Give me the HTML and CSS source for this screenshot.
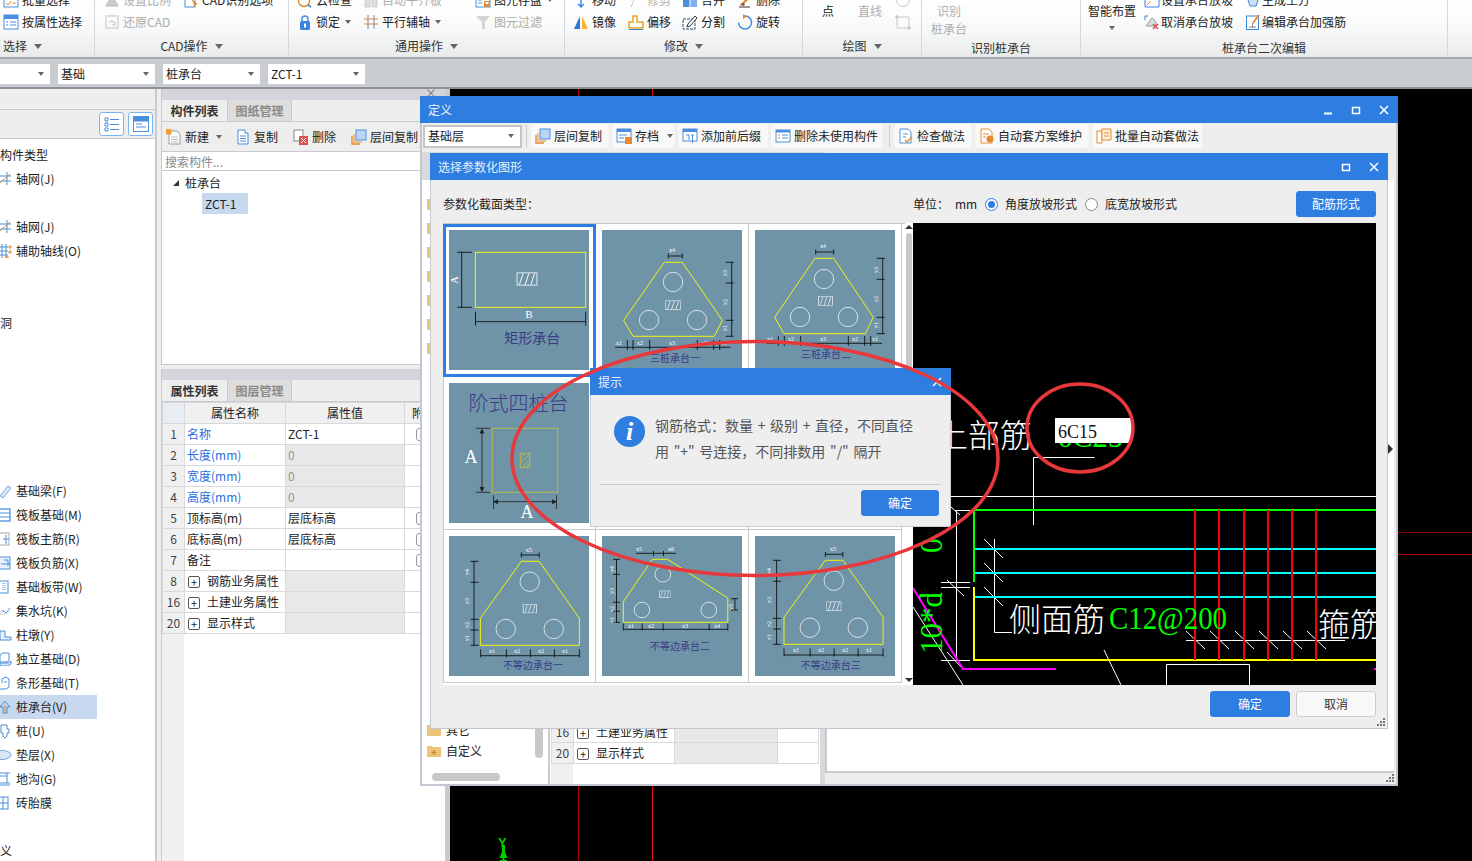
FILE: index.html
```html
<!DOCTYPE html>
<html lang="zh-CN">
<head>
<meta charset="utf-8">
<title>定义 - 桩承台</title>
<link rel="stylesheet" href="styles.css">
</head>
<body>
<svg class="sprite" xmlns="http://www.w3.org/2000/svg">
  <symbol id="i-batch" viewBox="0 0 16 16"><rect x="1" y="3" width="14" height="12" fill="#fff" stroke="#4a8fdc"/><path d="M3 11l2 2 3-4M9 11h4" stroke="#e58a2e" fill="none"/></symbol>
  <symbol id="i-attr" viewBox="0 0 16 16"><rect x="1" y="1" width="14" height="14" fill="#fff" stroke="#4a8fdc"/><rect x="1" y="1" width="14" height="4" fill="#4a8fdc"/><path d="M3 8h2M7 8h6M3 11h2M7 11h6" stroke="#4a8fdc"/></symbol>
  <symbol id="i-scale" viewBox="0 0 16 16"><path d="M2 14L8 3l6 11z" fill="#ccc" stroke="#bbb"/></symbol>
  <symbol id="i-cadopt" viewBox="0 0 16 16"><rect x="2" y="3" width="10" height="12" fill="#fff" stroke="#4a8fdc"/><path d="M9 8l5 4-3 .5 1 2.5" fill="#e58a2e" stroke="#e58a2e"/></symbol>
  <symbol id="i-restore" viewBox="0 0 16 16"><rect x="2" y="2" width="12" height="12" fill="none" stroke="#c4c4c4"/><path d="M5 9l3-3v2h3v3H8" fill="none" stroke="#c4c4c4"/></symbol>
  <symbol id="i-cloud" viewBox="0 0 16 16"><circle cx="7" cy="9" r="5.5" fill="#fff" stroke="#e58a2e" stroke-width="1.5"/><path d="M11 13l3 2" stroke="#4a8fdc" stroke-width="2"/></symbol>
  <symbol id="i-level" viewBox="0 0 16 16"><path d="M2 6h5v9H2zM9 6h5v9H9z" fill="#ddd" stroke="#ccc"/></symbol>
  <symbol id="i-save" viewBox="0 0 16 16"><rect x="1" y="2" width="14" height="13" fill="#fff" stroke="#4a8fdc"/><rect x="1" y="2" width="14" height="4" fill="#4a8fdc"/><path d="M3 8h4M3 11h4" stroke="#4a8fdc"/><rect x="9" y="9" width="6" height="6" fill="#e58a2e"/><rect x="10.5" y="10" width="3" height="2" fill="#fff"/></symbol>
  <symbol id="i-lock" viewBox="0 0 16 16"><path d="M5 8V5a3 3 0 016 0v3" fill="none" stroke="#4a8fdc" stroke-width="1.5"/><rect x="3" y="7" width="10" height="9" rx="1.5" fill="#3c84e0"/><rect x="7" y="9.5" width="2" height="4" fill="#fff"/></symbol>
  <symbol id="i-axis" viewBox="0 0 16 16"><path d="M1 5h14M1 10h14" stroke="#e58a2e"/><path d="M5 1v14M11 1v14" stroke="#7a8a9c"/></symbol>
  <symbol id="i-filter" viewBox="0 0 16 16"><path d="M1 2h14L10 8v7H7V8z" fill="#d4d4d4"/></symbol>
  <symbol id="i-move" viewBox="0 0 16 16"><path d="M8 5v10M5 12l3 3 3-3M3 7L1 5l2-2M13 3l2 2-2 2M1 5h14" fill="none" stroke="#3c84e0" stroke-width="1.4"/></symbol>
  <symbol id="i-trim" viewBox="0 0 16 16"><path d="M3 15L9 1" stroke="#c8c8c8"/></symbol>
  <symbol id="i-merge" viewBox="0 0 16 16"><rect x="1" y="2" width="6.5" height="13" fill="#4a8fdc"/><rect x="8.5" y="2" width="6.5" height="13" fill="#7db0ea"/></symbol>
  <symbol id="i-del" viewBox="0 0 16 16"><path d="M6 10l6-7 2 2-6 6z" fill="#e58a2e"/><path d="M2 15h11" stroke="#333"/><path d="M3 13l3-3 2 2-1 2z" fill="#a0522d"/></symbol>
  <symbol id="i-mirror" viewBox="0 0 16 16"><path d="M1 15L7 2v13z" fill="#2f77d6"/><path d="M9 2l6 13H9z" fill="#f4b632"/></symbol>
  <symbol id="i-offset" viewBox="0 0 16 16"><path d="M5 2h4v6h6v6H1V8h4z" fill="none" stroke="#e8a92b" stroke-width="1.6"/><path d="M1 15.500h14" stroke="#3c84e0"/></symbol>
  <symbol id="i-split" viewBox="0 0 16 16"><rect x="1" y="5" width="12" height="10" fill="none" stroke="#33506f" stroke-dasharray="3 1"/><path d="M6 10l7-8 2 2-7 8-3 1z" fill="#fff" stroke="#333"/></symbol>
  <symbol id="i-rotate" viewBox="0 0 16 16"><path d="M8 2a6.500 6.500 0 11-6.500 6.500" fill="none" stroke="#4a8fdc" stroke-width="1.5"/><path d="M6 0l4 2.500L6 5z" fill="#e58a2e"/></symbol>
  <symbol id="i-circle" viewBox="0 0 16 16"><circle cx="8" cy="8" r="6.500" fill="none" stroke="#c8c8c8"/></symbol>
  <symbol id="i-rect" viewBox="0 0 16 16"><path d="M2 3h12v11H2z" fill="none" stroke="#c8c8c8"/><path d="M1 2h2v2H1zM13 13h2v2h-2z" fill="#fff" stroke="#bbb"/></symbol>
  <symbol id="i-slope" viewBox="0 0 16 16"><path d="M1 1h8v6h6v8H1z" fill="#fff" stroke="#3c84e0"/><path d="M3 13l4-4" stroke="#e58a2e"/></symbol>
  <symbol id="i-earth" viewBox="0 0 16 16"><ellipse cx="8" cy="4" rx="6" ry="3" fill="#e9e3d0" stroke="#b79b56"/><path d="M2 5l3 9h6l3-9" fill="#cfe0f4" stroke="#3c84e0"/></symbol>
  <symbol id="i-unslope" viewBox="0 0 16 16"><path d="M1 2h3M1 2v4" stroke="#3c84e0"/><path d="M2 12L8 4l4 4v4z" fill="#ddd" stroke="#999"/><path d="M9 10l5 5M14 10l-5 5" stroke="#d9534f" stroke-width="1.600"/></symbol>
  <symbol id="i-strong" viewBox="0 0 16 16"><rect x="1.500" y="2" width="12" height="13.500" fill="#fff" stroke="#3c84e0"/><path d="M8 9L14 1" stroke="#e58a2e" stroke-width="2"/><path d="M4 13h7M7.500 9v5" stroke="#888"/></symbol>
  <symbol id="i-new" viewBox="0 0 16 16"><path d="M3 2h8l3 3v10H3z" fill="#fff" stroke="#999"/><path d="M5 8h7M5 10.500h7M5 13h7" stroke="#bbb"/><rect x="0" y="0" width="5.500" height="5.500" fill="#f0a030"/></symbol>
  <symbol id="i-copy" viewBox="0 0 16 16"><path d="M3 1h7v3h3v11H3z" fill="#fff" stroke="#4a8fdc"/><path d="M5 7h6M5 9.500h6M5 12h6" stroke="#4a8fdc"/></symbol>
  <symbol id="i-rm" viewBox="0 0 16 16"><rect x="1" y="1" width="9" height="11" fill="#fff" stroke="#888"/><rect x="6" y="7" width="9" height="9" fill="#d9534f"/><path d="M8 9l5 5M13 9l-5 5" stroke="#fff"/></symbol>
  <symbol id="i-floor" viewBox="0 0 16 16"><path d="M1 7v8h8" fill="none" stroke="#e58a2e" stroke-width="1.400"/><path d="M3 5v8h8" fill="none" stroke="#e58a2e"/><rect x="5" y="1" width="10" height="10" fill="#b8d6f7" stroke="#4a8fdc"/></symbol>
  <symbol id="i-archive" viewBox="0 0 16 16"><rect x="1" y="1" width="14" height="13" fill="#fff" stroke="#4a8fdc"/><rect x="1" y="1" width="14" height="3" fill="#4a8fdc"/><path d="M3 7h8M3 10h5" stroke="#4a8fdc"/><rect x="9" y="9" width="7" height="7" fill="#e58a2e"/></symbol>
  <symbol id="i-prefix" viewBox="0 0 16 16"><rect x="1" y="1" width="14" height="12" fill="#fff" stroke="#4a8fdc"/><rect x="1" y="1" width="14" height="3" fill="#4a8fdc"/><path d="M4 7h3v5M9 7h3M10.500 7v8" stroke="#4a8fdc" fill="none"/></symbol>
  <symbol id="i-unused" viewBox="0 0 16 16"><rect x="1" y="2" width="14" height="12" fill="#fff" stroke="#4a8fdc"/><rect x="1" y="2" width="14" height="2.500" fill="#4a8fdc"/><path d="M3 7h2M3 10h2" stroke="#e58a2e"/><path d="M7 7h6M7 10h6" stroke="#4a8fdc"/></symbol>
  <symbol id="i-check" viewBox="0 0 16 16"><path d="M2 1h8l3 3v11H2z" fill="#fff" stroke="#4a8fdc"/><path d="M5 6h5M5 9h3" stroke="#4a8fdc"/><path d="M7 12l2 2 5-5" fill="none" stroke="#e58a2e" stroke-width="1.500"/></symbol>
  <symbol id="i-auto" viewBox="0 0 16 16"><path d="M2 1h8l3 3v11H2z" fill="#fff" stroke="#e58a2e"/><path d="M4 6h6M4 9h3" stroke="#e58a2e"/><circle cx="11" cy="11" r="3.500" fill="#e58a2e"/></symbol>
  <symbol id="i-bulk" viewBox="0 0 16 16"><path d="M1 3h5v12H1z" fill="#fff" stroke="#e58a2e"/><path d="M6 1h9v11H6z" fill="#fdf0dc" stroke="#e58a2e"/><path d="M8 5h5M8 8h5" stroke="#e58a2e"/></symbol>
  <symbol id="i-grid" viewBox="0 0 12 14"><path d="M0 4h11M0 9h11M7 0v13" stroke="#4a8fdc" fill="none"/><path d="M0 11L10 2" stroke="#e58a2e"/></symbol>
  <symbol id="i-aux" viewBox="0 0 12 14"><path d="M0 3h8M0 7h8M0 11h8M2 0v14M6 0v14" stroke="#4a8fdc"/><path d="M9 2h2v2H9zM9 7h2v2H9zM6 12h2v2H6z" fill="none" stroke="#e58a2e"/></symbol>
  <symbol id="i-beam" viewBox="0 0 12 14"><path d="M0 12L8 2l3 2-8 10z" fill="#dbe7f5" stroke="#7aa7da"/></symbol>
  <symbol id="i-raft" viewBox="0 0 12 14"><rect x="-2" y="1" width="12" height="12" fill="none" stroke="#4a8fdc" stroke-width="1.300"/><path d="M0 5h10M0 9h10" stroke="#4a8fdc"/></symbol>
  <symbol id="i-main" viewBox="0 0 12 14"><rect x="-3" y="1" width="12" height="12" fill="none" stroke="#aaa"/><path d="M6 3v9M3 7h6" stroke="#4a8fdc"/></symbol>
  <symbol id="i-neg" viewBox="0 0 12 14"><rect x="-3" y="1" width="13" height="12" fill="#e8f1fb" stroke="#4a8fdc"/><path d="M4 4h4v6M1 8h9" fill="none" stroke="#4a8fdc"/></symbol>
  <symbol id="i-band" viewBox="0 0 12 14"><rect x="-3" y="1" width="11" height="12" fill="none" stroke="#4a8fdc"/><path d="M3 3v8M5 3v8" stroke="#4a8fdc" stroke-dasharray="1 1"/></symbol>
  <symbol id="i-pit" viewBox="0 0 12 14"><path d="M1 7h3l2 2 4-5" fill="none" stroke="#4a8fdc"/><path d="M0 10h7l3-3" fill="none" stroke="#aaa" stroke-dasharray="1 1"/></symbol>
  <symbol id="i-pier" viewBox="0 0 12 14"><path d="M0 3h5v6h6v3H0z" fill="#e8f1fb" stroke="#4a8fdc"/></symbol>
  <symbol id="i-iso" viewBox="0 0 12 14"><path d="M0 3l3-2h6v7l-2 2H0z" fill="#fff" stroke="#4a8fdc"/><path d="M0 11h8l3-2v3l-3 2H0z" fill="#dbe7f5" stroke="#4a8fdc"/></symbol>
  <symbol id="i-strip" viewBox="0 0 12 14"><path d="M2 7V3l4-2 3 2v8l-3 2H0" fill="#fff" stroke="#4a8fdc"/><path d="M4 6h3" stroke="#4a8fdc"/></symbol>
  <symbol id="i-cap" viewBox="0 0 12 14"><path d="M0 7l5-6 5 6-3 0v6H3V7z" fill="none" stroke="#4a8fdc"/><path d="M5 5v8" stroke="#e58a2e"/></symbol>
  <symbol id="i-pile" viewBox="0 0 12 14"><path d="M1 1h6v4h2v4H7v3l-2 2-2-2V9H1z" fill="none" stroke="#4a8fdc"/></symbol>
  <symbol id="i-pad" viewBox="0 0 12 14"><ellipse cx="2" cy="7" rx="9" ry="4.500" fill="#dbe7f5" stroke="#7aa7da"/></symbol>
  <symbol id="i-trench" viewBox="0 0 12 14"><path d="M0 1h10M7 1v10M0 4h7M0 11h10M0 13h10" fill="none" stroke="#4a8fdc"/></symbol>
  <symbol id="i-brick" viewBox="0 0 12 14"><rect x="-3" y="1" width="11" height="12" fill="none" stroke="#4a8fdc"/><path d="M-3 7h11M3 1v12" stroke="#4a8fdc"/></symbol>
  <symbol id="i-folder" viewBox="0 0 14 14"><path d="M0 2h5l1 1h8v10H0z" fill="#eec47c"/></symbol>
  <symbol id="i-folderadd" viewBox="0 0 14 14"><path d="M0 2h5l1 1h8v10H0z" fill="#eec47c"/><path d="M7 6v5M4.500 8.500h5" stroke="#c98f2e" stroke-width="1.400"/></symbol>
  <symbol id="i-hatch" viewBox="0 0 22 14"><rect x=".5" y=".5" width="21" height="13" fill="none" stroke="#fff"/><path d="M3 13l4-12M9 13l4-12M15 13l4-12" stroke="#fff"/></symbol>
</svg>

<div class="app">
  <header class="ribbon">
    <section class="group">
      <div class="tools tools-select">
        <div class="tool"><svg class="ic"><use href="#i-batch"/></svg>批量选择</div>
        <div class="tool"><svg class="ic"><use href="#i-attr"/></svg>按属性选择</div>
      </div>
      <div class="group-label left">选择<i class="tri"></i></div>
    </section>
    <section class="group">
      <div class="tools tools-cad">
        <div class="tool off"><svg class="ic"><use href="#i-scale"/></svg>设置比例</div>
        <div class="tool"><svg class="ic"><use href="#i-cadopt"/></svg>CAD识别选项</div>
        <div class="tool off"><svg class="ic"><use href="#i-restore"/></svg>还原CAD</div>
      </div>
      <div class="group-label">CAD操作<i class="tri"></i></div>
    </section>
    <section class="group">
      <div class="tools tools-common">
        <div class="tool"><svg class="ic"><use href="#i-cloud"/></svg>云检查</div>
        <div class="tool off"><svg class="ic"><use href="#i-level"/></svg>自动平齐板</div>
        <div class="tool"><svg class="ic"><use href="#i-save"/></svg>图元存盘<i class="tri small"></i></div>
        <div class="tool"><svg class="ic"><use href="#i-lock"/></svg>锁定<i class="tri small"></i></div>
        <div class="tool"><svg class="ic"><use href="#i-axis"/></svg>平行辅轴<i class="tri small"></i></div>
        <div class="tool off"><svg class="ic"><use href="#i-filter"/></svg>图元过滤</div>
      </div>
      <div class="group-label">通用操作<i class="tri"></i></div>
    </section>
    <section class="group">
      <div class="tools tools-modify">
        <div class="tool"><svg class="ic"><use href="#i-move"/></svg>移动</div>
        <div class="tool off"><svg class="ic"><use href="#i-trim"/></svg>修剪</div>
        <div class="tool"><svg class="ic"><use href="#i-merge"/></svg>合并</div>
        <div class="tool"><svg class="ic"><use href="#i-del"/></svg>删除</div>
        <div class="tool"><svg class="ic"><use href="#i-mirror"/></svg>镜像</div>
        <div class="tool"><svg class="ic"><use href="#i-offset"/></svg>偏移</div>
        <div class="tool"><svg class="ic"><use href="#i-split"/></svg>分割</div>
        <div class="tool"><svg class="ic"><use href="#i-rotate"/></svg>旋转</div>
      </div>
      <div class="group-label">修改<i class="tri"></i></div>
    </section>
    <section class="group">
      <div class="tools tools-draw">
        <div class="tall">点</div>
        <div class="tall off">直线</div>
        <div class="tool"><svg class="ic"><use href="#i-circle"/></svg></div>
        <div class="tool"><svg class="ic"><use href="#i-rect"/></svg></div>
      </div>
      <div class="group-label">绘图<i class="tri"></i></div>
    </section>
    <section class="group">
      <div class="tools tools-rec">
        <div class="stack off">识别<br>桩承台</div>
      </div>
      <div class="group-label low">识别桩承台</div>
    </section>
    <section class="group">
      <div class="tools tools-pile">
        <div class="smart">智能布置<i class="tri small"></i></div>
        <div class="tool"><svg class="ic"><use href="#i-slope"/></svg>设置承台放坡</div>
        <div class="tool"><svg class="ic"><use href="#i-earth"/></svg>生成土方</div>
        <div class="tool"><svg class="ic"><use href="#i-unslope"/></svg>取消承台放坡</div>
        <div class="tool"><svg class="ic"><use href="#i-strong"/></svg>编辑承台加强筋</div>
      </div>
      <div class="group-label low">桩承台二次编辑</div>
    </section>
  </header>

  <nav class="selbar">
    <div class="select first"><i class="tri small"></i></div>
    <div class="select">基础<i class="tri small"></i></div>
    <div class="select">桩承台<i class="tri small"></i></div>
    <div class="select">ZCT-1<i class="tri small"></i></div>
  </nav>

  <main class="workspace">
    <aside class="nav-panel">
      <div class="nav-top"></div>
      <div class="nav-tools">
        <span class="view-btn"><svg width="16" height="16" viewBox="0 0 16 16"><path d="M1 2h3v3H1zM1 7h3v3H1zM1 12h3v3H1zM6 3.500h9M6 8.500h9M6 13.500h9" fill="none" stroke="#4a8fdc"/></svg></span>
        <span class="view-btn"><svg width="16" height="16" viewBox="0 0 16 16"><rect x=".5" y=".5" width="15" height="15" fill="#fff" stroke="#4a8fdc"/><rect x=".5" y=".5" width="15" height="5" fill="#4a8fdc"/><path d="M3 8h6M3 11h10" stroke="#4a8fdc"/></svg></span>
      </div>
      <ul class="nav-list">
        <li>构件类型</li>
        <li class="item"><svg class="ni"><use href="#i-grid"/></svg>轴网(J)</li>
        <li></li>
        <li class="item"><svg class="ni"><use href="#i-grid"/></svg>轴网(J)</li>
        <li class="item"><svg class="ni"><use href="#i-aux"/></svg>辅助轴线(O)</li>
        <li></li>
        <li></li>
        <li>洞</li>
        <li></li><li></li><li></li><li></li><li></li><li></li>
        <li class="item"><svg class="ni"><use href="#i-beam"/></svg>基础梁(F)</li>
        <li class="item"><svg class="ni"><use href="#i-raft"/></svg>筏板基础(M)</li>
        <li class="item"><svg class="ni"><use href="#i-main"/></svg>筏板主筋(R)</li>
        <li class="item"><svg class="ni"><use href="#i-neg"/></svg>筏板负筋(X)</li>
        <li class="item"><svg class="ni"><use href="#i-band"/></svg>基础板带(W)</li>
        <li class="item"><svg class="ni"><use href="#i-pit"/></svg>集水坑(K)</li>
        <li class="item"><svg class="ni"><use href="#i-pier"/></svg>柱墩(Y)</li>
        <li class="item"><svg class="ni"><use href="#i-iso"/></svg>独立基础(D)</li>
        <li class="item"><svg class="ni"><use href="#i-strip"/></svg>条形基础(T)</li>
        <li class="item current"><svg class="ni"><use href="#i-cap"/></svg>桩承台(V)</li>
        <li class="item"><svg class="ni"><use href="#i-pile"/></svg>桩(U)</li>
        <li class="item"><svg class="ni"><use href="#i-pad"/></svg>垫层(X)</li>
        <li class="item"><svg class="ni"><use href="#i-trench"/></svg>地沟(G)</li>
        <li class="item"><svg class="ni"><use href="#i-brick"/></svg>砖胎膜</li>
        <li></li>
        <li>义</li>
      </ul>
    </aside>

    <div class="mid-panel">
      <section class="pane upper">
        <div class="band"><span class="band-x">×</span></div>
        <div class="tabs"><span class="tab active">构件列表</span><span class="tab">图纸管理</span></div>
        <div class="pane-tools">
          <span class="ptool"><svg class="ic"><use href="#i-new"/></svg>新建<i class="tri small"></i></span>
          <span class="ptool"><svg class="ic"><use href="#i-copy"/></svg>复制</span>
          <span class="ptool"><svg class="ic"><use href="#i-rm"/></svg>删除</span>
          <span class="ptool"><svg class="ic"><use href="#i-floor"/></svg>层间复制</span>
        </div>
        <div class="search">搜索构件...</div>
        <div class="tree">
          <div class="tree-root"><i class="corner"></i>桩承台</div>
          <div class="tree-leaf">ZCT-1</div>
        </div>
      </section>
      <section class="pane lower">
        <div class="band"></div>
        <div class="tabs"><span class="tab active">属性列表</span><span class="tab">图层管理</span></div>
        <table class="props">
          <colgroup><col class="c-n"><col class="c-name"><col class="c-val"><col class="c-x"></colgroup>
          <tr class="head"><th class="corner-cell"></th><th>属性名称</th><th>属性值</th><th class="clip">附加</th></tr>
          <tr><td class="num">1</td><td class="link">名称</td><td>ZCT-1</td><td><i class="cb"></i></td></tr>
          <tr><td class="num">2</td><td class="link">长度(mm)</td><td class="dis">0</td><td></td></tr>
          <tr><td class="num">3</td><td class="link">宽度(mm)</td><td class="dis">0</td><td></td></tr>
          <tr><td class="num">4</td><td class="link">高度(mm)</td><td class="dis">0</td><td></td></tr>
          <tr><td class="num">5</td><td>顶标高(m)</td><td>层底标高</td><td><i class="cb"></i></td></tr>
          <tr><td class="num">6</td><td>底标高(m)</td><td>层底标高</td><td><i class="cb"></i></td></tr>
          <tr><td class="num">7</td><td>备注</td><td></td><td><i class="cb"></i></td></tr>
          <tr><td class="num">8</td><td><i class="plus">+</i>钢筋业务属性</td><td class="dis"></td><td></td></tr>
          <tr><td class="num">16</td><td><i class="plus">+</i>土建业务属性</td><td class="dis"></td><td></td></tr>
          <tr><td class="num">20</td><td><i class="plus">+</i>显示样式</td><td class="dis"></td><td></td></tr>
        </table>
        <div class="gutter"></div>
      </section>
    </div>
    <div class="splitter"></div>

    <svg class="cad-back" viewBox="451 89 1021 772" xmlns="http://www.w3.org/2000/svg">
      <path d="M578.500 89v772" stroke="#a00"/>
      <path d="M652.500 89v772" stroke="#e01010"/>
      <path d="M1398 532.500h74" stroke="#8a0000"/>
      <path d="M1398 554.500h74" stroke="#b00000"/>
      <path d="M503.500 848l-4 10h8z" fill="#0c0"/>
      <path d="M503.500 858v3M500 861h7" stroke="#0c0" stroke-width="2"/>
      <path d="M503.500 845v10" stroke="#0c0" stroke-width="3"/>
      <text class="cad-y" x="498" y="847">Y</text>
    </svg>
  </main>
</div>

<!-- 定义 window -->
<div class="window def">
  <div class="titlebar"><span>定义</span>
    <div class="win-btns">
      <svg class="wb" viewBox="0 0 12 12"><path d="M2 9.500h8" stroke="#fff" stroke-width="2"/></svg>
      <svg class="wb" viewBox="0 0 12 12"><path d="M2.500 3.500h7v6h-7z" fill="none" stroke="#fff" stroke-width="1.500"/></svg>
      <svg class="wb" viewBox="0 0 12 12"><path d="M2 2l8 8M10 2l-8 8" stroke="#fff" stroke-width="1.500"/></svg>
    </div>
  </div>
  <div class="def-tools">
    <div class="select def-select">基础层<i class="tri small"></i></div>
    <i class="vsep"></i>
    <span class="pill p1"><svg class="ic"><use href="#i-floor"/></svg>层间复制</span>
    <span class="pill p2"><svg class="ic"><use href="#i-archive"/></svg>存档<i class="tri small"></i></span>
    <span class="pill p3"><svg class="ic"><use href="#i-prefix"/></svg>添加前后缀</span>
    <span class="pill p4"><svg class="ic"><use href="#i-unused"/></svg>删除未使用构件</span>
    <i class="vsep"></i>
    <span class="pill p5"><svg class="ic"><use href="#i-check"/></svg>检查做法</span>
    <span class="pill p6"><svg class="ic"><use href="#i-auto"/></svg>自动套方案维护</span>
    <span class="pill p7"><svg class="ic"><use href="#i-bulk"/></svg>批量自动套做法</span>
  </div>
  <div class="def-body">
    <div class="def-tree">
      <div class="def-tree-top">
        <svg class="fold"><use href="#i-folder"/></svg><svg class="fold"><use href="#i-folder"/></svg><svg class="fold"><use href="#i-folder"/></svg><svg class="fold"><use href="#i-folder"/></svg><svg class="fold"><use href="#i-folder"/></svg><svg class="fold"><use href="#i-folder"/></svg><svg class="fold"><use href="#i-folder"/></svg>
      </div>
      <div class="def-tree-bottom">
        <div class="fold-row"><svg class="fold"><use href="#i-folder"/></svg>其它</div>
        <div class="fold-row"><svg class="fold"><use href="#i-folderadd"/></svg>自定义</div>
      </div>
      <i class="vthumb"></i>
      <i class="hthumb"></i>
    </div>
    <div class="def-table">
      <table class="props small">
        <colgroup><col class="c-n"><col class="c2-name"><col class="c2-val"><col class="c2-x"></colgroup>
        <tr><td class="num">16</td><td><i class="plus">+</i>土建业务属性</td><td class="dis"></td><td></td></tr>
        <tr><td class="num">20</td><td><i class="plus">+</i>显示样式</td><td class="dis"></td><td></td></tr>
      </table>
      <div class="gutter short"></div>
    </div>
    <div class="def-right"><div class="right-sheet"></div><i class="right-tab"></i></div>
  </div>
  <svg class="grip g-def" viewBox="0 0 8 8"><path d="M6 0h2v2H6zM3 3h2v2H3zM6 3h2v2H6zM0 6h2v2H0zM3 6h2v2H3zM6 6h2v2H6z" fill="#777"/></svg>
</div>

<!-- 选择参数化图形 dialog -->
<div class="window param">
  <div class="titlebar"><span>选择参数化图形</span>
    <div class="win-btns">
      <svg class="wb" viewBox="0 0 12 12"><path d="M2.500 3.500h7v6h-7z" fill="none" stroke="#fff" stroke-width="1.500"/></svg>
      <svg class="wb" viewBox="0 0 12 12"><path d="M2 2l8 8M10 2l-8 8" stroke="#fff" stroke-width="1.500"/></svg>
    </div>
  </div>
  <div class="param-head">
    <b class="plain">参数化截面类型：</b>
    <div class="units">
      <span class="unit-l">单位：</span><span class="unit-v">mm</span>
      <i class="radio on"></i><span class="r1">角度放坡形式</span>
      <i class="radio"></i><span>底宽放坡形式</span>
    </div>
    <button class="btn primary">配筋形式</button>
  </div>
  <div class="param-main">
    <div class="gallery">
      <div class="thumbs">
        <figure class="cell sel">
          <svg class="thumb" viewBox="0 0 140 140">
            <rect class="y" x="26.300" y="22.300" width="110.400" height="55"/>
            <path class="k" d="M12.700 22.300v55M8.300 22.300H23M8.300 77.300H23M26.500 91.700h110.200M26.500 81.700v14M136.700 81.700v14"/>
            <use href="#i-hatch" x="67.300" y="42.300" width="21.400" height="13.400"/>
            <text class="lt" transform="translate(9 50) rotate(-90)">A</text>
            <text class="lt" x="80" y="88">B</text>
            <text class="cap big" x="83.300" y="113">矩形承台</text>
          </svg>
        </figure>
        <figure class="cell">
          <svg class="thumb" viewBox="0 0 140 140">
            <path class="y" d="M62.300 32.300h18l40 58-8 16H31l-9.300-16z"/>
            <circle class="w" cx="71" cy="52" r="9.700"/><circle class="w" cx="47" cy="90" r="9.700"/><circle class="w" cx="95" cy="90" r="9.700"/>
            <use href="#i-hatch" x="63.300" y="70.300" width="15.400" height="10"/>
            <path class="k" d="M66.300 26h14M66.300 23.500v5M80.300 23.500v5M129.700 32.300v74M123.700 32.300h8M123.700 53h8M123.700 90.300h8M123.700 106.300h8M13 117.300h115.700M25.300 110v10M31 110v10M47.700 110v10M95.300 110v10M111.700 110v10M117.700 110v10"/>
            <text class="dl" x="70" y="22">x4</text><text class="dl" x="17" y="115">x1</text><text class="dl" x="38" y="115">x2</text><text class="dl" x="70" y="115">x3</text><text class="dl" x="102" y="115">x2</text><text class="dl" x="122" y="115">x1</text>
            <text class="dl" transform="translate(125 43) rotate(-90)">y3</text><text class="dl" transform="translate(125 72) rotate(-90)">y2</text><text class="dl" transform="translate(125 98) rotate(-90)">y1</text>
            <text class="cap" x="73" y="131.500">三桩承台一</text>
          </svg>
        </figure>
        <figure class="cell">
          <svg class="thumb" viewBox="0 0 140 140">
            <path class="y" d="M60 28.300h18.700l39.600 59-8 16.400H29l-9.300-16.400z"/>
            <circle class="w" cx="69" cy="49" r="9.700"/><circle class="w" cx="45" cy="87" r="9.700"/><circle class="w" cx="93" cy="87" r="9.700"/>
            <use href="#i-hatch" x="62.300" y="66.300" width="16.400" height="9.400"/>
            <path class="k" d="M60.700 22h18M60.700 19.500v5M78.700 19.500v5M127.700 28.300v75.400M121.700 28.300h8M121.700 49.300h8M121.700 87.300h8M121.700 103.700h8M11.700 113.300H127M23.300 106v10M29.300 106v10M45.700 106v10M93.300 106v10M109.700 106v10M115.700 106v10"/>
            <text class="dl" x="68" y="18">x4</text><text class="dl" x="15" y="111">x1</text><text class="dl" x="36" y="111">x2</text><text class="dl" x="68" y="111">x3</text><text class="dl" x="100" y="111">x2</text><text class="dl" x="120" y="111">x1</text>
            <text class="dl" transform="translate(123 40) rotate(-90)">y3</text><text class="dl" transform="translate(123 69) rotate(-90)">y2</text><text class="dl" transform="translate(123 95) rotate(-90)">y1</text>
            <text class="cap" x="71" y="127.500">三桩承台二</text>
          </svg>
        </figure>
        <figure class="cell">
          <svg class="thumb" viewBox="0 0 140 140">
            <text class="serif-t" x="69.600" y="28">阶式四桩台</text>
            <rect class="ol" x="43.200" y="45.300" width="65.600" height="64"/>
            <rect class="ol" x="71.300" y="70.300" width="9.400" height="14.400"/>
            <path class="ol" d="M71.300 75l5-4.700M71.300 80l9-9M73 84.700l7.700-8M77 84.700l3.700-4"/>
            <path class="dk" d="M33 47v61M26.600 45.300H41M26.600 109.300H41M44 118.700h63.800M44.500 112v14M107.500 112v14"/>
            <path class="dkf" d="M33 45.600l-2.500 5h5zM33 109l-2.500-5h5zM44 118.700l5-2.500v5zM108 118.700l-5-2.500v5z"/>
            <text class="serif-a" x="22" y="80">A</text><text class="serif-a" x="78" y="135">A</text>
          </svg>
        </figure>
        <figure class="cell"><span class="thumb blank"></span></figure>
        <figure class="cell"><span class="thumb blank"></span></figure>
        <figure class="cell">
          <svg class="thumb" viewBox="0 0 140 140">
            <path class="y" d="M72.300 25.300h17.900l40.200 57v27h-99v-27z"/>
            <circle class="w" cx="80.700" cy="45.700" r="9.700"/><circle class="w" cx="56.700" cy="93" r="9.700"/><circle class="w" cx="104.700" cy="93" r="9.700"/>
            <use href="#i-hatch" x="73" y="68.300" width="15.800" height="9"/>
            <path class="k" d="M72.300 19h17.900M72.300 16.500v5M90.200 16.500v5M25 25.300v84M21.600 25.300h8M21.600 46.300h8M21.600 83.300h8M21.600 94h8M21.600 109.300h8M31.700 119.700h98.700M31.700 113.300v8M57.400 113.300v8M81.400 113.300v8M105.400 113.300v8M130.400 113.300v8"/>
            <text class="dl" x="80" y="16">x5</text><text class="dl" x="43" y="117">x1</text><text class="dl" x="68" y="117">x2</text><text class="dl" x="92" y="117">x2</text><text class="dl" x="116" y="117">x1</text>
            <text class="dl" transform="translate(20 36) rotate(-90)">y4</text><text class="dl" transform="translate(20 65) rotate(-90)">y3</text><text class="dl" transform="translate(20 89) rotate(-90)">y2</text><text class="dl" transform="translate(20 102) rotate(-90)">y1</text>
            <text class="cap" x="84" y="132.500">不等边承台一</text>
          </svg>
        </figure>
        <figure class="cell">
          <svg class="thumb" viewBox="0 0 140 140">
            <path class="y" d="M50.400 23.300h15.200l60.200 38.700v24.300H21.300V65.700z"/>
            <circle class="w" cx="60.900" cy="38.300" r="7.800"/><circle class="w" cx="40" cy="74" r="7.800"/><circle class="w" cx="106.800" cy="74" r="7.800"/>
            <use href="#i-hatch" x="57" y="54.300" width="11.600" height="8"/>
            <path class="k" d="M34 17.300h40M51.500 15v5M61.500 15v5M14.500 23.300v63M11 23.300h7M11 38.300h7M11 66.300h7M11 75.300h7M11 86.300h7M132.900 62.700V74M129 62.700h7M129 74h7M21.300 93.300h104.500M21.300 87.500v7M40.200 87.500v7M61.200 87.500v7M107.200 87.500v7M125.800 87.500v7"/>
            <text class="dl" x="37" y="15">x5</text><text class="dl" x="69" y="15">x6</text><text class="dl" x="29" y="92">x1</text><text class="dl" x="49" y="92">x2</text><text class="dl" x="83" y="92">x3</text><text class="dl" x="115" y="92">x4</text>
            <text class="dl" transform="translate(12 33) rotate(-90)">y4</text><text class="dl" transform="translate(12 55) rotate(-90)">y3</text><text class="dl" transform="translate(12 73) rotate(-90)">y2</text><text class="dl" transform="translate(12 84) rotate(-90)">y1</text><text class="dl" transform="translate(131 71) rotate(-90)">y5</text>
            <text class="cap" x="78" y="114">不等边承台二</text>
          </svg>
        </figure>
        <figure class="cell">
          <svg class="thumb" viewBox="0 0 140 140">
            <path class="y" d="M70.300 24.300h17.600l40.200 57v27H29v-27z"/>
            <circle class="w" cx="78.800" cy="44.700" r="9.700"/><circle class="w" cx="54.800" cy="91.700" r="9.700"/><circle class="w" cx="102.800" cy="91.700" r="9.700"/>
            <use href="#i-hatch" x="71.300" y="65.300" width="15.200" height="10"/>
            <path class="k" d="M70.300 18.300h17.600M70.300 16v5M87.900 16v5M21.600 24.300v84M18 24.300h8M18 45.300h8M18 82.300h8M18 93h8M18 108.300h8M29 119h99.100M29 112.500v8M55.100 112.500v8M79.100 112.500v8M103.100 112.500v8M128.100 112.500v8"/>
            <text class="dl" x="78" y="15">x5</text><text class="dl" x="41" y="116">x1</text><text class="dl" x="66" y="116">x2</text><text class="dl" x="90" y="116">x2</text><text class="dl" x="114" y="116">x1</text>
            <text class="dl" transform="translate(16 35) rotate(-90)">y4</text><text class="dl" transform="translate(16 64) rotate(-90)">y3</text><text class="dl" transform="translate(16 88) rotate(-90)">y2</text><text class="dl" transform="translate(16 101) rotate(-90)">y1</text>
            <text class="cap" x="75.700" y="132.500">不等边承台三</text>
          </svg>
        </figure>
      </div>
    </div>
    <div class="scrollbar"><i class="arrow up"></i><i class="sb-thumb"></i><i class="arrow down"></i></div>
    <svg class="cad" viewBox="913 223 463 462" xmlns="http://www.w3.org/2000/svg">
      <path class="c-w" d="M913 496.500h463M1033.500 457.500h61M1033.500 457v68M956.500 510v150M955 510.500h15M941 582.500h29M941 587.500h29M941 660.500h29M951 507l9 8M947 580l17 16M994.500 539v93.500H1012M984 539l19 19M984 563l19 19M984 587l19 19M1186 640.500h159M1186 631l19 18M1210 631l19 18M1235 631l19 18M1259 631l19 18M1283 631l19 18M1307 631l19 18M913 607l50 78M947 652l15 16M1104 650l17 35M1166.500 685v-20.500h83V685"/>
      <path class="c-m" d="M913 588l50 81h93M1374 669h2"/>
      <path class="c-g" d="M974 510h402M974 509v73"/>
      <path class="c-y" d="M974 587v73M973 660h403"/>
      <path class="c-c" d="M975 549h401M975 573h401M975 597h401"/>
      <path class="c-r" d="M1195 510v150M1219 510v150M1244 510v150M1268 510v150M1292 510v150M1316 510v150"/>
      <text class="c-txt" x="936" y="447">上部筋</text>
      <text class="c-num" x="1057" y="447" textLength="66" lengthAdjust="spacingAndGlyphs">6C25</text>
      <rect x="1055" y="418" width="77" height="25" fill="#fff"/>
      <text class="c-input" x="1058" y="438" textLength="39" lengthAdjust="spacingAndGlyphs">6C15</text>
      <text class="c-txt" x="1009" y="631">侧面筋</text>
      <text class="c-num" x="1109" y="629" textLength="118" lengthAdjust="spacingAndGlyphs">C12@200</text>
      <text class="c-txt" x="1318" y="636">箍筋</text>
      <text class="c-num" transform="translate(942 654) rotate(-90)" textLength="62" lengthAdjust="spacingAndGlyphs">10*d</text>
      <text class="c-num" transform="translate(942 553) rotate(-90)" textLength="15" lengthAdjust="spacingAndGlyphs">0</text>
    </svg>
  </div>
  <div class="param-foot">
    <button class="btn primary">确定</button>
    <button class="btn">取消</button>
  </div>
  <svg class="grip g-param" viewBox="0 0 8 8"><path d="M6 0h2v2H6zM3 3h2v2H3zM6 3h2v2H6zM0 6h2v2H0zM3 6h2v2H3zM6 6h2v2H6z" fill="#777"/></svg>
</div>

<!-- 提示 -->
<div class="window alert">
  <div class="titlebar"><span>提示</span>
    <div class="win-btns"><svg class="wb" viewBox="0 0 12 12"><path d="M2 2l8 8M10 2l-8 8" stroke="#fff" stroke-width="1.500"/></svg></div>
  </div>
  <div class="alert-body">
    <span class="info">i</span>
    <p>钢筋格式：数量 + 级别 + 直径，不同直径<br>用 "+" 号连接，不同排数用 "/" 隔开</p>
  </div>
  <div class="alert-foot"><button class="btn primary">确定</button></div>
</div>

<svg class="ink" viewBox="0 0 1472 861" xmlns="http://www.w3.org/2000/svg">
  <ellipse cx="755" cy="458.500" rx="243" ry="117"/>
  <ellipse cx="1080" cy="428" rx="53" ry="44"/>
</svg>
</body>
</html>
```

FILE: styles.css
```css
* { box-sizing: border-box; }
html, body { margin: 0; padding: 0; }
body {
  width: 1472px;
  height: 861px;
  overflow: hidden;
  position: relative;
  background: #000;
  color: #222;
  font: 12px/16px "Noto Sans CJK SC", "Noto Sans", sans-serif;
}
i { font-style: normal; }
.sprite { position: absolute; width: 0; height: 0; }
.app { display: flex; flex-direction: column; height: 861px; }

/* ribbon */
.ribbon {
  display: grid;
  grid-template-columns: 95px 194px 276px 238px 119px 159px 367px 1fr;
  height: 59px;
  flex: none;
  overflow: hidden;
  background: linear-gradient(#fff, #f8f9f9 50%, #e9ebeb);
  border-bottom: 2px solid #a4a7ab;
}
.group {
  height: 56px;
  display: flex;
  flex-direction: column;
  border-right: 1px solid #d5d7da;
}
.tools {
  display: grid;
  grid-template-rows: 22px 22px;
  margin-top: -11px;
  height: 44px;
  flex: none;
  align-items: center;
}
.tool { display: flex; align-items: center; gap: 3px; white-space: nowrap; }
.ic { width: 16px; height: 16px; flex: none; }
.off { color: #adadad; }
.group-label { margin-top: 3px; height: 20px; line-height: 20px; text-align: center; color: #333; }
.group-label.left { text-align: left; padding-left: 3px; }
.group-label.low { margin-top: 5px; }
.tri {
  display: inline-block;
  width: 0; height: 0;
  margin-left: 7px;
  vertical-align: 2px;
  border: 4px solid transparent;
  border-top: 5px solid #666;
  border-bottom: 0;
}
.tri.small { margin-left: 2px; border-width: 3px; border-top-width: 4px; border-bottom-width: 0; vertical-align: 2px; }
.tools-select { padding-left: 3px; }
.tools-cad { padding-left: 9px; grid-template-columns: 79px 1fr; }
.tools-common { padding-left: 8px; grid-template-columns: 66px 112px 1fr; }
.tools-modify { padding-left: 8px; grid-template-columns: 55px 54px 55px 1fr; }
.tools-draw { padding-left: 19px; grid-template-columns: 36px 37px 1fr; }
.tools-draw .tall { grid-row: 1 / span 2; }
.tools-draw .tool { grid-column: 3; }
.tools-rec { grid-template-columns: 54px; }
.stack { grid-row: 1 / span 2; align-self: start; margin-top: 13px; text-align: center; line-height: 18px; }
.tools-pile { padding-left: 6px; grid-template-columns: 57px 101px 1fr; }
.tools-pile .tool { gap: 1px; }
.smart { grid-row: 1 / span 2; width: 50px; text-align: center; line-height: 18px; margin-top: 13px; align-self: start; }
.smart .tri.small { display: block; margin: 6px auto 0; }

/* selector bar */
.selbar {
  display: flex;
  gap: 6px;
  height: 30px;
  flex: none;
  padding-top: 4px;
  background: #c9ccd1;
  border-bottom: 2px solid #8f9296;
}
.select {
  width: 99px;
  height: 22px;
  padding-left: 3px;
  display: flex;
  align-items: center;
  justify-content: space-between;
  background: #fff;
  border: 1px solid #c9ccd1;
  color: #222;
}
.select .tri.small { margin: 0 6px 0 auto; }
.select.first { margin-left: -48px; }

/* workspace */
.workspace { flex: 1; display: flex; min-height: 0; background: #000; }
.nav-panel { width: 157px; flex: none; background: #fff; border-right: 2px solid #c9cacd; overflow: hidden; }
.nav-top { height: 21px; background: #eee; border-bottom: 1px solid #c9cacd; }
.nav-tools {
  height: 29px;
  display: flex;
  justify-content: flex-end;
  align-items: center;
  gap: 4px;
  padding-right: 2px;
  background: #eee;
  border-bottom: 1px solid #c9cacd;
}
.view-btn {
  width: 25px; height: 24px;
  display: grid;
  place-items: center;
  background: #fff;
  border: 1px solid #7ab4f2;
  border-radius: 3px;
}
.nav-list { list-style: none; margin: 0; padding: 4px 0 0; }
.nav-list li { height: 24px; line-height: 24px; white-space: nowrap; display: flex; align-items: center; gap: 4px; }
.nav-list .current { width: 97px; background: #c7d8ef; }
.ni { width: 12px; height: 14px; flex: none; }

.mid-panel { width: 293px; flex: none; display: flex; flex-direction: column; padding-left: 4px; background: #eee; border-right: 5px solid #c9cacd; }
.pane { display: flex; flex-direction: column; border-left: 1px solid #c9cacd; }
.upper { height: 276px; background: #fff; border-bottom: 1px solid #c9cacd; }
.lower { flex: 1; margin-top: 4px; background: #fff; min-height: 0; }
.band { height: 11px; flex: none; background: #d3d5da; position: relative; }
.band-x { position: absolute; right: 8px; top: -2px; color: #777; line-height: 12px; }
.tabs { height: 22px; flex: none; display: flex; background: #eee; border-bottom: 1px solid #c9cacd; }
.tab {
  width: 65px;
  line-height: 21px;
  text-align: center;
  font-weight: 700;
  color: #333;
}
.tab + .tab { background: #ddd; color: #8a8a8a; border-left: 1px solid #c9cacd; border-right: 1px solid #c9cacd; }
.pane-tools { height: 30px; flex: none; display: flex; align-items: center; padding-left: 4px; background: #eee; border-bottom: 1px solid #c9cacd; }
.ptool { display: flex; align-items: center; gap: 3px; white-space: nowrap; margin-right: 15px; }
.ptool:first-child { margin-right: 13px; }
.ptool .tri.small { margin-left: 4px; }
.search { height: 19px; flex: none; line-height: 19px; padding-left: 3px; color: #8a8a8a; border-bottom: 1px solid #c9cacd; }
.tree { flex: 1; padding-top: 1px; }
.tree-root { height: 21px; line-height: 21px; padding-left: 23px; position: relative; }
.corner {
  position: absolute; left: 11px; top: 8px;
  border-left: 6px solid transparent;
  border-bottom: 6px solid #333;
}
.tree-leaf { margin-left: 40px; width: 46px; height: 21px; line-height: 21px; padding-left: 3px; background: #c7d8ef; }

.props { border-collapse: collapse; table-layout: fixed; width: 259px; flex: none; }
.props.small { width: 267px; }
.c-n { width: 22px; }
.c-name { width: 101px; }
.c-val { width: 119px; }
.c-x { width: 17px; }
.c2-name { width: 101px; }
.c2-val { width: 103px; }
.c2-x { width: 41px; }
.props td, .props th {
  height: 21px;
  padding: 0 2px;
  border: 1px solid #d9d9d9;
  font-weight: 400;
  white-space: nowrap;
  overflow: hidden;
  text-align: left;
}
.props .head th { background: #f0f0f0; text-align: center; }
.props .head th.corner-cell { background: #e8edf3; }
.props .head th.clip { text-align: left; padding-left: 7px; }
.props .num { background: #f0f0f0; text-align: center; padding: 0; color: #444; }
.props .link { color: #2a6fdb; }
.props .dis { background: #e8e8e8; color: #999; }
.cb { display: inline-block; width: 12px; height: 13px; margin-left: 9px; vertical-align: -2px; background: #fff; border: 1px solid #999; border-radius: 3px; }
.plus {
  display: inline-block;
  width: 12px; height: 12px;
  margin: 0 7px 0 1px;
  line-height: 10px;
  text-align: center;
  vertical-align: -1px;
  border: 1px solid #555;
  border-radius: 2px;
  font-size: 11px;
}
.gutter { flex: 1; width: 22px; background: #f0f0f0; }
.splitter { width: 1px; flex: none; }
.cad-back { flex: 1; min-width: 0; width: 1021px; height: 772px; background: #000; }
.cad-y { fill: #0c0; font: 700 13px "Liberation Sans", sans-serif; }

/* windows: placed freely on the desktop */
.window { position: absolute; display: flex; flex-direction: column; background: #eee; }
.titlebar {
  height: 27px;
  flex: none;
  display: flex;
  align-items: center;
  justify-content: space-between;
  padding: 0 8px;
  background: #2e7de1;
  color: #e8f1fc;
}
.win-btns { display: flex; gap: 16px; }
.wb { width: 12px; height: 12px; }

.def {
  left: 420px; top: 96px;
  width: 978px; height: 690px;
  border: 2px solid #c3c7d2;
  border-top: 0;
}
.def > .titlebar { margin: 0 -2px; }
.def-tools { height: 29px; flex: none; display: flex; align-items: center; padding: 0 0 3px 1px; background: #eee; }
.def-select { width: 99px; height: 23px; border: 2px solid #c6c6c6; flex: none; }
.vsep { width: 1px; height: 22px; margin: 0 4px; background: #c9cacd; flex: none; }
.pill {
  height: 24px;
  display: flex;
  align-items: center;
  gap: 3px;
  padding: 0 0 0 4px;
  margin-right: 3px;
  flex: none;
  background: #f8f8f8;
  border-radius: 3px;
  white-space: nowrap;
}
.pill .tri.small { margin-left: 5px; }
.p1 { width: 78px; }
.p2 { width: 63px; }
.p3 { width: 90px; }
.p4 { width: 111px; }
.p5 { width: 78px; }
.p6 { width: 114px; }
.p7 { width: 110px; }
.def-body { flex: 1; min-height: 0; display: flex; background: #d8d9dd; }
.def-tree {
  width: 128px;
  margin-top: 28px;
  position: relative;
  display: flex;
  flex-direction: column;
  justify-content: space-between;
  background: #fff;
  border-right: 2px solid #c9cacd;
  flex: none;
  padding-left: 5px;
}
.def-tree-top { display: flex; flex-direction: column; gap: 10px; padding-top: 17px; }
.def-tree-bottom { padding-bottom: 23px; }
.fold { width: 14px; height: 14px; flex: none; display: block; }
.fold-row { display: flex; align-items: center; gap: 5px; height: 21px; }
.vthumb { position: absolute; left: 113px; top: 500px; width: 8px; height: 78px; background: #c8c8c8; border-radius: 4px; }
.hthumb { position: absolute; left: 10px; bottom: 3px; width: 68px; height: 8px; background: #c8c8c8; border-radius: 4px; }
.def-table { width: 270px; flex: none; margin-top: 28px; display: flex; flex-direction: column; justify-content: flex-end; background: #fff; padding-left: 1px; position: relative; }
.gutter.short { flex: none; height: 20px; }
.def-right { flex: 1; display: flex; flex-direction: column; position: relative; background: #eee; margin-left: 5px; }
.right-sheet { flex: 1; margin: 28px 2px 11px 0; background: #fff; border-bottom: 2px solid #c9cacd; border-left: 2px solid #c9cacd; }
.right-tab {
  position: absolute; right: 3px; top: 292px;
  border-left: 5px solid #333;
  border-top: 5px solid transparent;
  border-bottom: 5px solid transparent;
}
.grip { position: absolute; width: 8px; height: 8px; }
.g-def { right: 2px; bottom: 2px; }
.g-param { right: 2px; bottom: 2px; }

.param {
  left: 430px; top: 153px;
  width: 958px; height: 576px;
  border-right: 1px solid #c3c7d2;
  border-bottom: 1px solid #c3c7d2;
  border-left: 1px solid #c3c7d2;
}
.param > .titlebar { margin: 0 -1px; }
.param-head { height: 43px; flex: none; display: flex; align-items: center; padding: 5px 11px 0 12px; }
.plain { font-weight: 400; width: 470px; flex: none; }
.units { flex: 1; display: flex; align-items: center; }
.unit-l { width: 42px; }
.unit-v { width: 30px; }
.r1 { margin-right: 8px; }
.radio {
  width: 13px; height: 13px;
  margin-right: 7px;
  border: 1px solid #888;
  border-radius: 50%;
  background: #fff;
  flex: none;
  display: grid;
  place-items: center;
}
.radio.on { border-color: #2e7de1; }
.radio.on::after { content: ""; width: 7px; height: 7px; border-radius: 50%; background: #2e7de1; }
.btn {
  width: 80px; height: 26px;
  padding: 0;
  font: inherit;
  color: #333;
  background: #f8f8f8;
  border: 1px solid #c9ced8;
  border-radius: 3px;
}
.btn.primary { background: #2e7de1; border-color: #2e7de1; color: #fff; }
.param-main { display: flex; height: 462px; flex: none; margin-left: 12px; }
.gallery { width: 462px; flex: none; background: #fff; border-top: 1px solid #c8c8c8; overflow: hidden; }
.thumbs { display: grid; grid-template-columns: repeat(3, 153px); grid-auto-rows: 153px; }
.cell { margin: 0; display: grid; place-items: center; border: 1px solid #c8c8c8; border-width: 0 1px 1px 0; }
.cell:nth-child(3n+1) { border-left: 1px solid #c8c8c8; padding-right: 1px; }
.cell.sel { border: 3px solid #2e7de1; padding-bottom: 1px; }
.thumb { width: 140px; height: 140px; display: block; background: #6f94a8; }
.y { fill: none; stroke: #ff0; stroke-width: .9; }
.w { fill: none; stroke: #fff; stroke-width: .7; }
.k { fill: none; stroke: #000; stroke-width: .8; }
.ol { fill: none; stroke: #b8b84e; stroke-width: 1; }
.dk { fill: none; stroke: #333; stroke-width: 1; }
.dkf { fill: #222; }
.lt { font: 11px "Liberation Serif", serif; fill: #fff; text-anchor: middle; }
.dl { font: 6px "Liberation Serif", serif; fill: #fff; text-anchor: middle; }
.cap { font: 10px "Noto Sans CJK SC", sans-serif; fill: #3a3a86; text-anchor: middle; }
.cap.big { font-size: 14px; }
.serif-t { font: 300 20px "Noto Sans CJK SC", serif; fill: #3a3a86; text-anchor: middle; }
.serif-a { font: 18px "Liberation Serif", serif; fill: #fff; text-anchor: middle; }
.scrollbar { width: 8px; flex: none; background: #fff; position: relative; }
.sb-thumb { position: absolute; left: 1px; top: 10px; width: 6px; height: 220px; background: #c8c8c8; border-radius: 3px; }
.arrow { position: absolute; left: 0; border-left: 4px solid transparent; border-right: 4px solid transparent; }
.arrow.up { top: 2px; border-bottom: 4px solid #333; }
.arrow.down { bottom: 3px; border-top: 4px solid #333; }
.cad { width: 463px; height: 462px; flex: none; background: #000; }
.c-w { fill: none; stroke: #fff; stroke-width: 1; }
.c-m { fill: none; stroke: #f0f; stroke-width: 2; }
.c-g { fill: none; stroke: #0f0; stroke-width: 2; }
.c-y { fill: none; stroke: #ff0; stroke-width: 2; }
.c-c { fill: none; stroke: #0ff; stroke-width: 2; }
.c-r { fill: none; stroke: #f00; stroke-width: 2; }
.c-txt { font: 300 32px "Noto Sans CJK SC", sans-serif; fill: #fff; }
.c-num { font: 32px "Liberation Serif", serif; fill: #0f0; }
.c-input { font: 19px "Liberation Serif", serif; fill: #111; }
.param-foot { flex: 1; display: flex; justify-content: flex-end; gap: 6px; padding: 6px 11px 0 0; }

.alert {
  left: 590px; top: 368px;
  width: 361px; height: 159px;
  border: 1px solid #c9ced8;
  border-top: 0;
}
.alert > .titlebar { margin: 0 -1px; }
.alert-body { flex: 1; display: flex; gap: 10px; padding: 17px 0 0 14px; border-bottom: 1px solid #c9cad4; margin: 0 9px; }
.info {
  width: 31px; height: 31px;
  margin-top: 4px;
  flex: none;
  border-radius: 50%;
  background: #2e7de1;
  color: #fff;
  text-align: center;
  font: italic 700 26px/31px "Liberation Serif", serif;
}
.alert-body p { margin: 0; font-size: 14px; line-height: 26px; color: #555; white-space: nowrap; word-spacing: 1.5px; }
.alert-foot { height: 41px; flex: none; display: flex; justify-content: flex-end; padding: 5px 11px 0 0; }
.alert-foot .btn { width: 78px; }

.ink { position: absolute; left: 0; top: 0; width: 1472px; height: 861px; pointer-events: none; }
.ink ellipse { fill: none; stroke: #e8383b; stroke-width: 3.5; }
```
